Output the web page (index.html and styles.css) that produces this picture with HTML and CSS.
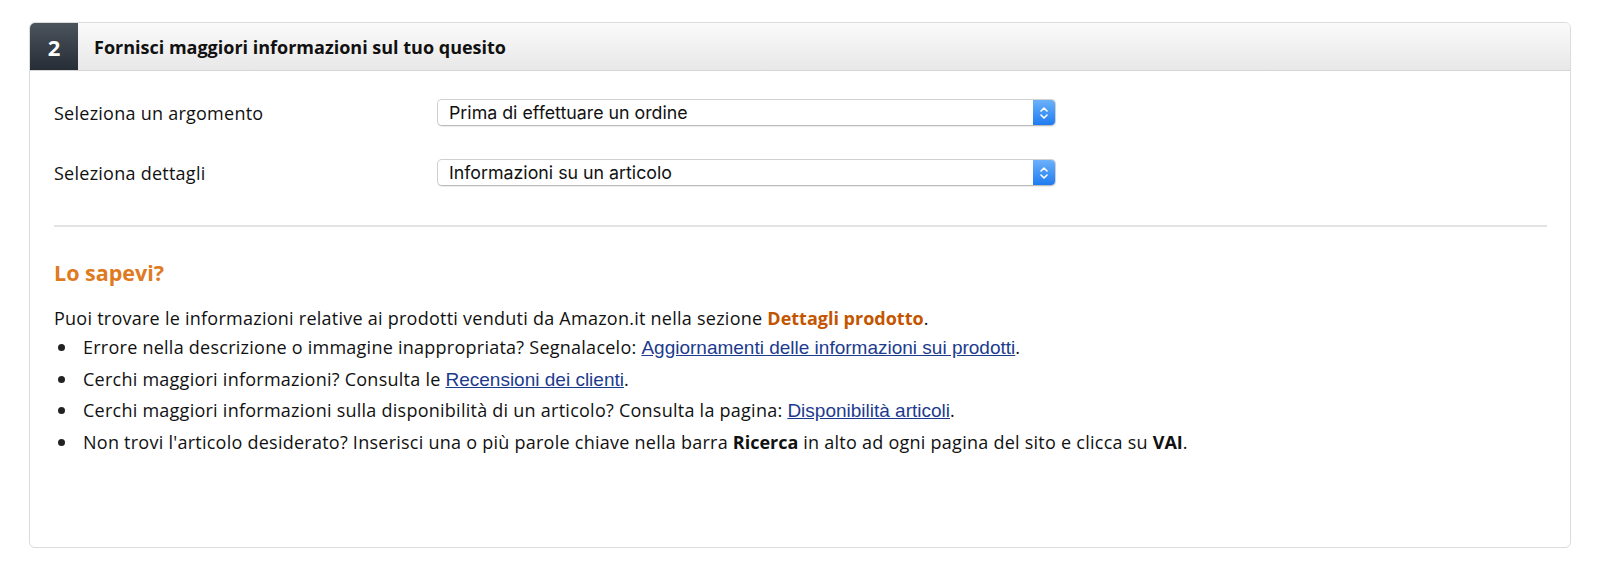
FILE: index.html
```html
<!DOCTYPE html>
<html lang="it">
<head>
    <meta charset="UTF-8">
    <meta name="viewport" content="width=device-width, initial-scale=1.0">
    <title>Contattaci</title>
    <link rel="stylesheet" href="styles.css">
</head>
<body>
    <div class="page">
        <div class="step-box">
            <div class="step-header">
                <span class="step-number">2</span>
                <h2 class="step-title">Fornisci maggiori informazioni sul tuo quesito</h2>
            </div>

            <div class="step-body">
                <div class="field-row">
                    <label class="field-label">Seleziona un argomento</label>
                    <div class="select-box">
                        <span class="select-text">Prima di effettuare un ordine</span>
                        <span class="select-arrows">
                            <svg width="10" height="16" viewBox="0 0 10 16"><path d="M2 6 L5 3 L8 6 M2 10 L5 13 L8 10" fill="none" stroke="#fff" stroke-width="1.6" stroke-linecap="round" stroke-linejoin="round"/></svg>
                        </span>
                    </div>
                </div>
                <div class="field-row">
                    <label class="field-label">Seleziona dettagli</label>
                    <div class="select-box">
                        <span class="select-text">Informazioni su un articolo</span>
                        <span class="select-arrows">
                            <svg width="10" height="16" viewBox="0 0 10 16"><path d="M2 6 L5 3 L8 6 M2 10 L5 13 L8 10" fill="none" stroke="#fff" stroke-width="1.6" stroke-linecap="round" stroke-linejoin="round"/></svg>
                        </span>
                    </div>
                </div>

                <hr class="divider">

                <h3 class="tip-title">Lo sapevi?</h3>
                <p class="tip-text">Puoi trovare le informazioni relative ai prodotti venduti da Amazon.it nella sezione <b class="highlight">Dettagli prodotto</b>.</p>
                <ul class="tip-list">
                    <li>Errore nella descrizione o immagine inappropriata? Segnalacelo: <a href="#">Aggiornamenti delle informazioni sui prodotti</a>.</li>
                    <li>Cerchi maggiori informazioni? Consulta le <a href="#">Recensioni dei clienti</a>.</li>
                    <li>Cerchi maggiori informazioni sulla disponibilità di un articolo? Consulta la pagina: <a href="#">Disponibilità articoli</a>.</li>
                    <li>Non trovi l'articolo desiderato? Inserisci una o più parole chiave nella barra <b>Ricerca</b> in alto ad ogni pagina del sito e clicca su <b>VAI</b>.</li>
                </ul>
            </div>
        </div>
    </div>
</body>
</html>
```

FILE: styles.css
```css
body {
    margin: 0;
    font-family: "Open Sans", "Noto Sans", Arial, sans-serif;
    color: #111;
    background-color: #fff;
}

.page {
    padding: 22px 29px 24px 29px;
}

.step-box {
    border: 1px solid #dcdcdc;
    border-radius: 6px;
    box-shadow: 0 0 1px rgba(0, 0, 0, 0.05);
}

.step-header {
    display: flex;
    align-items: center;
    height: 47px;
    background: linear-gradient(#fafafa, #e8e8e8);
    border-bottom: 1px solid #d6d6d6;
    border-radius: 5px 5px 0 0;
}

.step-number {
    display: flex;
    align-items: center;
    justify-content: center;
    width: 48px;
    height: 100%;
    background: linear-gradient(#4b535d, #262d36);
    border-radius: 5px 0 0 0;
    color: #fff;
    font-weight: bold;
    font-size: 22px;
}

.step-title {
    margin: 0 0 0 16px;
    font-size: 18px;
    font-weight: bold;
    color: #111;
}

.step-body {
    padding: 28px 23px 86px 24px;
}

.field-row {
    display: flex;
    align-items: center;
    margin-bottom: 33px;
}

.field-label {
    width: 383px;
    font-size: 18px;
    letter-spacing: 0.25px;
}

.select-box {
    display: flex;
    align-items: center;
    width: 619px;
    height: 27px;
    box-sizing: border-box;
    border: 1px solid #d0d0d0;
    border-bottom-color: #bcbcbc;
    border-radius: 5px;
    background-color: #fff;
    box-shadow: 0 1px 1px rgba(0, 0, 0, 0.08);
    overflow: hidden;
}

.select-text {
    flex: 1;
    padding-left: 11px;
    font-family: Inter, "Liberation Sans", Arial, sans-serif;
    font-size: 17.8px;
    color: #111;
}

.select-arrows {
    display: flex;
    align-items: center;
    justify-content: center;
    width: 22px;
    height: 100%;
    background: linear-gradient(#6cb1fb, #1e7cf1);
}

.divider {
    border: none;
    border-top: 2px solid #e3e3e3;
    margin: 39px 0 0 0;
}

.tip-title {
    margin: 33px 0 0 0;
    font-size: 21.5px;
    line-height: 26px;
    font-weight: bold;
    color: #e07a1f;
}

.tip-text {
    margin: 20px 0 0 0;
    font-size: 18px;
    line-height: 24px;
    letter-spacing: 0.25px;
}

.tip-text b,
.tip-list b {
    letter-spacing: 0;
}

.highlight {
    color: #c45500;
}

.tip-list {
    margin: 5px 0 0 0;
    padding-left: 29px;
    list-style: none;
    font-size: 18px;
    line-height: 24px;
    letter-spacing: 0.25px;
}

.tip-list li {
    margin-bottom: 7.5px;
}

.tip-list li::before {
    content: "";
    display: inline-block;
    width: 7px;
    height: 7px;
    margin-left: -25px;
    margin-right: 18px;
    border-radius: 50%;
    background-color: #222;
    vertical-align: 3px;
}

.tip-list a {
    font-family: "Liberation Sans", Arial, sans-serif;
    font-size: 19px;
    line-height: 1;
    letter-spacing: 0;
    color: #1c3b8e;
    text-decoration: underline;
}
```
